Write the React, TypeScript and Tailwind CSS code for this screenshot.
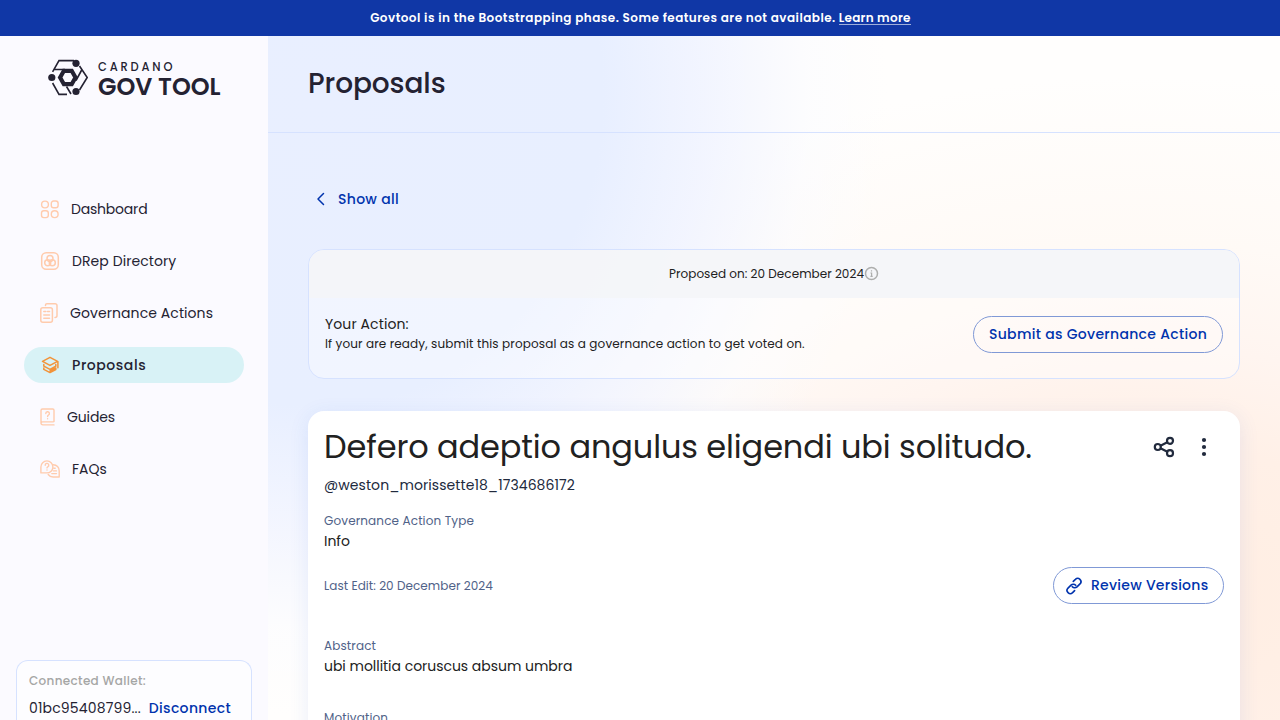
import type { ReactNode } from "react";

function Logo() {
  return (
    <div className="flex items-start gap-2.5 pl-12">
      <svg width="40" height="37" viewBox="0 0 40 37" fill="none" stroke="#242232" strokeWidth="1.6">
        <path d="M26 1.6H11L4.6 12.8M31.5 7 39.2 18.500 31.500 31M19 35.400H11L4.600 24M5.500 10.500H17M33.700 11 28 21.500M18.500 27.500 23 35" />
        <circle cx="28" cy="4.300" r="3.600" fill="#242232" stroke="none" />
        <circle cx="3.800" cy="18.500" r="3.600" fill="#242232" stroke="none" />
        <circle cx="28" cy="32.500" r="3.600" fill="#242232" stroke="none" />
        <path strokeWidth="4.200" d="M15.900 11.800h7.800l3.800 6.700-3.800 6.700h-7.800l-3.800-6.700z" />
      </svg>
      <div className="flex flex-col text-[#242232]">
        <span className="mt-px text-[11.5px] leading-[15px] font-medium tracking-[2.8px]">CARDANO</span>
        <span className="text-[24px] leading-[24px] font-semibold whitespace-nowrap">GOV TOOL</span>
      </div>
    </div>
  );
}

const navIcons: Record<string, ReactNode> = {
  dashboard: (
    <svg width="19" height="19" viewBox="0 0 19 19" fill="none" stroke="#FFCBAD" strokeWidth="1.400">
      <circle cx="5" cy="4.500" r="3.400" />
      <rect x="11.300" y="1" width="6.800" height="6.800" rx="2.300" />
      <rect x="1.500" y="10.800" width="6.800" height="6.800" rx="2.300" />
      <circle cx="14.700" cy="14.200" r="3.400" />
    </svg>
  ),
  drep: (
    <svg width="20" height="20" viewBox="0 0 20 20" fill="none" stroke="#FFCBAD" strokeWidth="1.500">
      <rect x="1.700" y="1.700" width="16.600" height="16.600" rx="4.500" />
      <circle cx="10" cy="7.600" r="3" />
      <circle cx="7.700" cy="11.800" r="3" />
      <circle cx="12.300" cy="11.800" r="3" />
    </svg>
  ),
  actions: (
    <svg width="18" height="20" viewBox="0 0 18 20" fill="none" stroke="#FFCBAD" strokeWidth="1.500" strokeLinecap="round">
      <rect x=".8" y="4.800" width="11.600" height="14.400" rx="2" />
      <path d="M5.500 2.500V2A1.300 1.300 0 0 1 6.800.8h8.400A1.800 1.800 0 0 1 17 2.600v10a2 2 0 0 1-2 2M3.800 8.500h2M7.500 8.500h2M3.800 12h5.700M3.800 15.300h5.700" />
    </svg>
  ),
  proposals: (
    <svg width="20" height="20" viewBox="0 0 20 20" fill="none" stroke="#F29339" strokeWidth="1.500" strokeLinejoin="round" strokeLinecap="round">
      <path d="M10 2.300 2.500 6.400 10 10.400l7.600-4zM17.900 6.600v6.200" />
      <path d="M3.800 9.600v1.500L10 14.400l5.800-3.200V9.600M3.800 13v1.400L10 17.600l5.800-3.100V13L10 16" />
    </svg>
  ),
  guides: (
    <svg width="15" height="18" viewBox="0 0 15 18" fill="none" stroke="#FFCBAD" strokeWidth="1.400" strokeLinecap="round">
      <path d="M14 13.500V2.200A1.200 1.200 0 0 0 12.800 1H2.500A1.500 1.500 0 0 0 1 2.500V15a1.800 1.800 0 0 0 1.800 1.900H14M1 15.200a1.500 1.500 0 0 1 1.500-1.300H13" />
      <path d="M5.800 5.600a1.800 1.800 0 1 1 2.600 1.600c-.6.300-.8.600-.8 1.300M7.600 10.700v.1" />
    </svg>
  ),
  faqs: (
    <svg width="20" height="18" viewBox="0 0 20 18" fill="none" stroke="#FFCBAD" strokeWidth="1.400" strokeLinecap="round" strokeLinejoin="round">
      <path d="M.9 12.900V6.900a6 6 0 1 1 6 6zM13.300 4.700a6 6 0 0 1 5.900 6.200V17h-6.100a6 6 0 0 1-4.900-2.500M14 8.300h1.200M13.500 10.900h3M11.800 13.600h4.700" />
      <path d="M5.200 5.300A1.800 1.800 0 1 1 7.800 6.800c-.6.300-.8.600-.8 1.100M7 9.900v.1" />
    </svg>
  ),
};

const nav = [
  { key: "dashboard", label: "Dashboard", tracking: "tracking-[-0.2px]" },
  { key: "drep", label: "DRep Directory", tracking: "tracking-[0.08px]" },
  { key: "actions", label: "Governance Actions", tracking: "tracking-[0.08px]" },
  { key: "proposals", label: "Proposals", tracking: "tracking-[0.55px]", active: true },
  { key: "guides", label: "Guides", tracking: "tracking-[-0.12px]" },
  { key: "faqs", label: "FAQs", tracking: "tracking-normal" },
];

function Sidebar() {
  return (
    <aside className="flex w-[268px] shrink-0 flex-col bg-[#FBFAFF] pt-[23px]">
      <Logo />
      <nav className="mt-[92px] flex flex-col gap-4 px-6">
        {nav.map((n) => (
          <a
            key={n.key}
            className={
              n.active
                ? "flex h-9 items-center gap-3 rounded-full bg-[#D8F2F6] pl-4 text-sm font-medium text-[#242232]"
                : "flex h-9 items-center gap-3 rounded-full pl-4 text-sm text-[#242232]"
            }
          >
            {navIcons[n.key]}
            <span className={`whitespace-nowrap ${n.tracking}`}>{n.label}</span>
          </a>
        ))}
      </nav>
      <div className="mx-4 mt-auto h-[60px] shrink-0 rounded-t-xl border border-b-0 border-[#D6E2FF] bg-white/60 px-3 pt-[11px]">
        <div className="text-xs leading-[18px] font-medium tracking-[0.33px] text-[#A5A6A5]">Connected Wallet:</div>
        <div className="mt-[7px] flex items-center gap-2 text-sm leading-[22px]">
          <span className="tracking-[0.16px] text-[#242232]">01bc95408799...</span>
          <span className="font-medium tracking-[0.33px] text-[#0033AD]">Disconnect</span>
        </div>
      </div>
    </aside>
  );
}

function StatusCard() {
  return (
    <section className="mt-8 h-[130px] overflow-hidden rounded-2xl border border-[#D6E2FF] bg-white/40">
      <div className="flex h-12 items-center justify-center bg-[#F4F5F8]/90 text-xs text-[#212121]">
        <span className="tracking-[0.04px]">Proposed on: 20 December 2024</span>
        <svg className="mb-px" width="15" height="15" viewBox="0 0 15 15" fill="none" stroke="#ADAEAD" strokeWidth="1.500">
          <circle cx="7.500" cy="7.500" r="6" />
          <path strokeWidth="1.200" d="M6.400 7h1.200v3.200M6.400 10.300h2.300M6.900 4.800h1.200" />
        </svg>
      </div>
      <div className="flex items-start justify-between px-4 pt-4 text-[#212121]">
        <div>
          <div className="text-sm leading-5 tracking-[0.1px]">Your Action:</div>
          <div className="text-xs leading-5 tracking-[0.13px]">If your are ready, submit this proposal as a governance action to get voted on.</div>
        </div>
        <button className="mt-0.5 flex h-[37px] w-[250px] items-center justify-center rounded-full border border-[#8099D6] pb-px text-sm font-medium tracking-[0.3px] text-[#0033AD]">
          Submit as Governance Action
        </button>
      </div>
    </section>
  );
}

function Field({ label, value }: { label: string; value: string }) {
  return (
    <div>
      <div className="text-xs leading-5 tracking-[0.13px] text-[#506288]">{label}</div>
      <div className="text-sm leading-5 tracking-[-0.03px] text-[#212121]">{value}</div>
    </div>
  );
}

function ProposalCard() {
  return (
    <article className="mt-8 h-[400px] rounded-2xl bg-white px-4 pt-4 shadow-[0_4px_20px_0_rgba(47,98,220,0.1)]">
      <div className="flex items-center justify-between">
        <h2 className="text-[32px] leading-10 tracking-[-0.11px] text-[#212121]">Defero adeptio angulus eligendi ubi solitudo.</h2>
        <div className="flex items-center gap-4 pr-2">
          <svg width="24" height="24" viewBox="0 0 24 24" fill="none" stroke="#212A3D" strokeWidth="2.200">
            <circle cx="18" cy="5.800" r="3" />
            <circle cx="5.800" cy="12" r="3" />
            <circle cx="18" cy="18.200" r="3" />
            <path d="m8.500 10.700 6.800-3.500M8.500 13.300l6.800 3.500" />
          </svg>
          <svg width="24" height="24" viewBox="0 0 24 24" fill="#212A3D">
            <circle cx="12" cy="5" r="2.100" />
            <circle cx="12" cy="12" r="2.100" />
            <circle cx="12" cy="19" r="2.100" />
          </svg>
        </div>
      </div>
      <div className="mt-2 text-sm leading-5 tracking-[0.07px] text-[#212A3D]">@weston_morissette18_1734686172</div>
      <div className="mt-4">
        <Field label="Governance Action Type" value="Info" />
      </div>
      <div className="mt-4 flex h-[37px] items-center justify-between">
        <span className="text-xs tracking-[0.06px] text-[#506288]">Last Edit: 20 December 2024</span>
        <button className="flex h-[37px] w-[171px] items-center gap-2 rounded-full border border-[#8099D6] pl-[11px] text-sm font-medium tracking-[0.26px] text-[#0033AD]">
          <svg className="mt-px" width="18" height="18" viewBox="0 0 18 18" fill="none" stroke="#0033AD" strokeWidth="1.600" strokeLinecap="round" strokeLinejoin="round">
            <path d="M7.300 9.700a3.300 3.300 0 0 0 4.700.2l3-3a3.200 3.200 0 0 0-4.600-4.500L8.300 4.400M10.700 8.300a3.300 3.300 0 0 0-4.700-.2l-3 3a3.200 3.200 0 0 0 4.600 4.500l2-2" />
          </svg>
          <span className="pb-px">Review Versions</span>
        </button>
      </div>
      <div className="mt-8 flex flex-col gap-8">
        <Field label="Abstract" value="ubi mollitia coruscus absum umbra" />
        <Field label="Motivation" value="" />
      </div>
    </article>
  );
}

export default function App() {
  return (
    <div className="flex h-[720px] w-[1280px] flex-col overflow-hidden bg-white font-[Poppins,Inter,sans-serif]">
      <div className="flex h-9 shrink-0 items-center justify-center gap-[3px] bg-[#1037A6] pl-px text-xs font-semibold tracking-[0.46px] text-white">
        <span>Govtool is in the Bootstrapping phase. Some features are not available.</span>
        <span className="border-b border-white/60 leading-[13px] tracking-[0.3px]">Learn more</span>
      </div>
      <div className="flex min-h-0 flex-1">
        <Sidebar />
        <main className="flex flex-1 flex-col bg-[radial-gradient(ellipse_570px_620px_at_50px_60px,#E9EFFF_0%,#E8EFFF_50%,#F1F4FFE6_68%,#FAFBFF80_86%,#FFFFFF00_100%),radial-gradient(ellipse_800px_520px_at_880px_560px,#FFEDE1_0%,#FFF0E7_30%,#FFF5F0_48%,#FFFAF6_68%,#FFFEFD_100%)]">
          <header className="flex h-[97px] shrink-0 items-center border-b border-[#D6E2FF] px-10">
            <h1 className="text-[28px] leading-9 font-medium tracking-[-0.1px] text-[#242232]">Proposals</h1>
          </header>
          <div className="flex flex-col px-10 pt-[48px]">
            <a className="flex h-9 items-center gap-2 pl-1 text-sm font-medium tracking-[0.3px] text-[#0033AD]">
              <svg width="18" height="18" viewBox="0 0 18 18" fill="none" stroke="#0033AD" strokeWidth="1.500" strokeLinecap="round" strokeLinejoin="round">
                <path d="M11.500 3.500 6 9l5.500 5.500" />
              </svg>
              Show all
            </a>
            <StatusCard />
            <ProposalCard />
          </div>
        </main>
      </div>
    </div>
  );
}
